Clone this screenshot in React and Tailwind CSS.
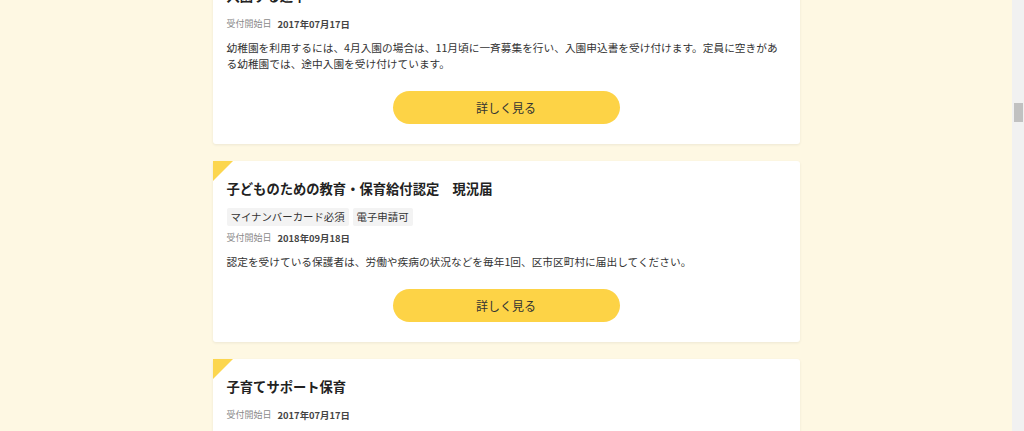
const ITEMS = [
  {
    title: '入園する途中',
    tags: [],
    date: '2017年07月17日',
    body: '幼稚園を利用するには、4月入園の場合は、11月頃に一斉募集を行い、入園申込書を受け付けます。定員に空きがある幼稚園では、途中入園を受け付けています。',
  },
  {
    title: '子どものための教育・保育給付認定　現況届',
    tags: ['マイナンバーカード必須', '電子申請可'],
    date: '2018年09月18日',
    body: '認定を受けている保護者は、労働や疾病の状況などを毎年1回、区市区町村に届出してください。',
  },
  {
    title: '子育てサポート保育',
    tags: [],
    date: '2017年07月17日',
    body: null,
  },
];

function Card({ item }) {
  return (
    <div className="relative bg-white rounded-[3px] shadow-[0_1px_3px_rgba(0,0,0,0.07)] pt-[18px] px-[14px] pb-[20px]">
      <div className="absolute left-0 top-0 w-0 h-0 border-t-[20px] border-r-[20px] border-t-[#fcd64e] border-r-transparent" />
      <h2 className="text-[13.3px] leading-[20px] font-bold text-[#222]">{item.title}</h2>
      {item.tags.length > 0 && (
        <div className="flex gap-[4px] mt-[9px]">
          {item.tags.map((t) => (
            <span key={t} className="bg-[#f3f3f3] text-[#333] text-[10.4px] leading-[18px] px-[4px] rounded-[2px]">
              {t}
            </span>
          ))}
        </div>
      )}
      <div className={`flex items-center gap-[6px] leading-[14px] ${item.tags.length > 0 ? 'mt-[5px]' : 'mt-[11px]'}`}>
        <span className="text-[9px] text-[#8a8a8a]">受付開始日</span>
        <span className="text-[9.4px] font-bold text-[#444]">{item.date}</span>
      </div>
      {item.body && (
        <>
          <p className="mt-[9px] text-[10.7px] leading-[16px] text-[#333]">{item.body}</p>
          <div className="flex justify-center mt-[19px]">
            <button className="w-[227px] h-[33px] rounded-full bg-[#fdd346] text-[12px] text-[#333]">
              詳しく見る
            </button>
          </div>
        </>
      )}
      {!item.body && <div className="h-[60px]" />}
    </div>
  );
}

export default function App() {
  return (
    <div
      className="flex h-[431px] overflow-hidden bg-[#fef8e3]"
      style={{ fontFamily: '"Noto Sans CJK JP", "Noto Sans", sans-serif' }}
    >
      <div className="flex-1 overflow-hidden">
        <div className="w-[587px] mx-auto mt-[-32px] flex flex-col gap-[17px]">
          {ITEMS.map((item, i) => (
            <Card key={i} item={item} />
          ))}
        </div>
      </div>
      <div className="w-[12px] bg-[#f1f1f1] flex justify-center">
        <div className="w-[9px] h-[19px] mt-[103px] bg-[#c1c1c1]" />
      </div>
    </div>
  );
}
